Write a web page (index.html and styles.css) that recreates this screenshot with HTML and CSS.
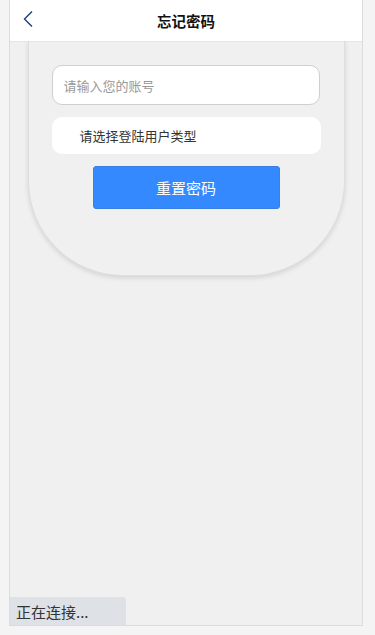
FILE: index.html
```html
<!DOCTYPE html>
<html lang="zh">
<head>
<meta charset="utf-8">
<title>忘记密码</title>
<link rel="stylesheet" href="styles.css">
</head>
<body>
<div class="frame">
  <header class="header">
    <span class="back">
      <svg width="12" height="18" viewBox="0 0 12 18"><path d="M10 1.5 L2.5 9 L10 16.5" fill="none" stroke="#1d3f73" stroke-width="1.4"/></svg>
    </span>
    <h1 class="title">忘记密码</h1>
  </header>
  <main class="content">
    <section class="card">
      <div class="input">请输入您的账号</div>
      <div class="select">请选择登陆用户类型</div>
      <button class="btn">重置密码</button>
    </section>
  </main>
  <div class="status">正在连接...</div>
</div>
</body>
</html>
```
FILE: styles.css
```css
html, body {
  margin: 0;
  padding: 0;
  background: #f3f4f3;
  font-family: "Noto Sans CJK SC", "Liberation Sans", sans-serif;
}
.frame {
  margin-left: 9px;
  width: 352px;
  height: 625px;
  background: #f0f0f0;
  border: 1px solid #dcdcdc;
  border-top: none;
  display: flex;
  flex-direction: column;
  position: relative;
}
.header {
  height: 41px;
  background: #fff;
  display: flex;
  align-items: center;
  justify-content: center;
  position: relative;
  box-shadow: 0 1px 1px rgba(0,0,0,0.04);
  z-index: 2;
}
.back {
  position: absolute;
  left: 12px;
  top: 10px;
  display: flex;
}
.title {
  margin: 0;
  font-size: 14.5px;
  font-weight: bold;
  color: #111;
}
.content {
  flex: 1;
  padding: 0 17px 0 18px;
}
.card {
  height: 235px;
  box-sizing: border-box;
  background: #f0f0f0;
  border: 1px solid #dedede;
  border-top: none;
  border-radius: 0 0 95px 95px;
  box-shadow: 0 2px 5px rgba(0,0,0,0.12);
  display: flex;
  flex-direction: column;
  align-items: center;
  padding-top: 24px;
}
.input {
  width: 268px;
  height: 40px;
  box-sizing: border-box;
  background: #fff;
  border: 1px solid #cfcfcf;
  border-radius: 10px;
  padding-left: 11px;
  display: flex;
  align-items: center;
  font-size: 13px;
  color: #999;
  margin-right: 2px;
}
.select {
  margin-top: 12px;
  width: 269px;
  height: 37px;
  box-sizing: border-box;
  background: #fff;
  border-radius: 10px;
  padding-left: 28px;
  display: flex;
  align-items: center;
  font-size: 13px;
  color: #333;
  margin-right: 1px;
}
.btn {
  margin-top: 12px;
  width: 187px;
  height: 43px;
  background: #3489fe;
  border: 1px solid #3a80e0;
  border-radius: 3px;
  color: #fff;
  font-family: inherit;
  font-size: 15px;
  margin-right: 1px;
}
.status {
  position: absolute;
  left: 0;
  bottom: 0;
  width: 116px;
  height: 28px;
  background: #dee1e6;
  border-top-right-radius: 3px;
  font-size: 15px;
  color: #333;
  padding-left: 6px;
  box-sizing: border-box;
  display: flex;
  align-items: center;
}
```
